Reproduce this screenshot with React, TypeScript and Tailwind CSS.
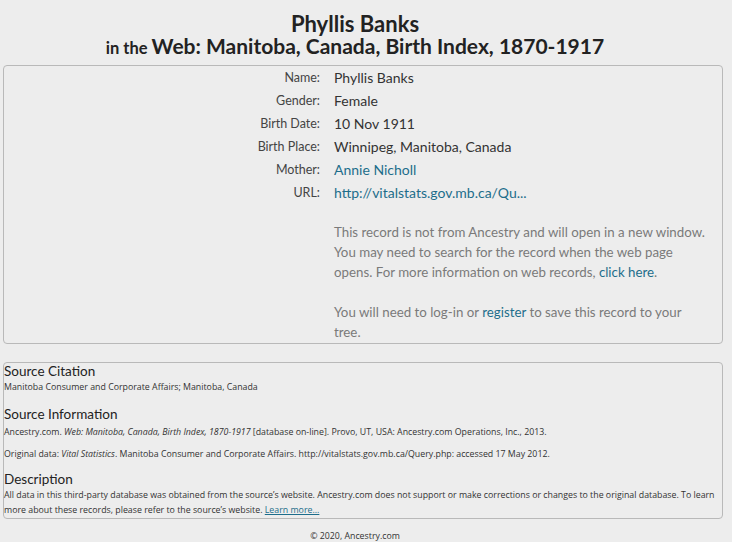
import React from 'react'

type Row = {
  label: string
  value: string
  link?: boolean
}

const rows: Row[] = [
  { label: 'Name:', value: 'Phyllis Banks' },
  { label: 'Gender:', value: 'Female' },
  { label: 'Birth Date:', value: '10 Nov 1911' },
  { label: 'Birth Place:', value: 'Winnipeg, Manitoba, Canada' },
  { label: 'Mother:', value: 'Annie Nicholl', link: true },
  { label: 'URL:', value: 'http://vitalstats.gov.mb.ca/Qu...', link: true },
]

const App = () => {
  return (
    <div className="min-h-[542px] w-[732px] bg-[#ededed] text-[#333] font-['Lato','Open_Sans',sans-serif]">
      <div className="w-[710px] pt-[12px] text-center font-bold text-[#222]">
        <h1 className="text-[22px] leading-[23px]">Phyllis Banks</h1>
        <h2 className="h-[22px] text-[21px] leading-[22px]">
          <span className="text-[16.5px]">in the </span>
          Web: Manitoba, Canada, Birth Index, 1870-1917
        </h2>
      </div>

      <section className="mt-[8px] ml-[3px] mr-[9px] rounded-[4px] border border-[#b9b9b9]">
        <div className="grid grid-cols-[316px_1fr] gap-x-[14px]">
          {rows.map((row) => (
            <React.Fragment key={row.label}>
              <div className="text-right text-[12.5px] leading-[23px] text-[#444]">{row.label}</div>
              <div
                className={
                  row.link
                    ? 'text-[14px] leading-[23px] text-[#1d6d8b]'
                    : 'text-[14px] leading-[23px] text-[#333]'
                }
              >
                {row.value}
              </div>
            </React.Fragment>
          ))}
          <div />
          <div className="mt-[18px] w-[375px] pb-[1px] text-[13.3px] leading-[20px] text-[#7a7a7a]">
            <p>
              This record is not from Ancestry and will open in a new window. You may need to search for
              the record when the web page opens. For more information on web records,{' '}
              <span className="text-[#1d6d8b]">click here</span>.
            </p>
            <p className="mt-[20px]">
              You will need to log-in or <span className="text-[#1d6d8b]">register</span> to save this
              record to your tree.
            </p>
          </div>
        </div>
      </section>

      <section className="mt-[18px] ml-[3px] mr-[9px] rounded-[4px] border border-[#b9b9b9] pr-[4px] font-['Open_Sans',sans-serif] text-[#333]">
        <h3 className="font-['Lato',sans-serif] text-[13.5px] leading-[17px] text-[#222]">Source Citation</h3>
        <p className="mt-[1px] text-[8.8px] leading-[13px]">
          Manitoba Consumer and Corporate Affairs; Manitoba, Canada
        </p>

        <h3 className="mt-[12px] font-['Lato',sans-serif] text-[13.5px] leading-[17px] text-[#222]">
          Source Information
        </h3>
        <p className="mt-[3px] text-[8.8px] leading-[13px]">
          Ancestry.com. <i>Web: Manitoba, Canada, Birth Index, 1870-1917</i> [database on-line]. Provo, UT,
          USA: Ancestry.com Operations, Inc., 2013.
        </p>
        <p className="mt-[9px] text-[8.8px] leading-[13px]">
          Original data: <i>Vital Statistics</i>. Manitoba Consumer and Corporate Affairs.
          http://vitalstats.gov.mb.ca/Query.php: accessed 17 May 2012.
        </p>

        <h3 className="mt-[10px] font-['Lato',sans-serif] text-[13.5px] leading-[17px] text-[#222]">
          Description
        </h3>
        <p className="text-[8.8px] leading-[15px]">
          All data in this third-party database was obtained from the source’s website. Ancestry.com does
          not support or make corrections or changes to the original database. To learn more about these
          records, please refer to the source’s website.{' '}
          <span className="text-[#1d6d8b] underline">Learn more...</span>
        </p>
      </section>

      <footer className="w-[710px] pt-[11px] text-center font-['Open_Sans',sans-serif] text-[8.8px] leading-[13px] text-[#333]">
        © 2020, Ancestry.com
      </footer>
    </div>
  )
}

export default App
